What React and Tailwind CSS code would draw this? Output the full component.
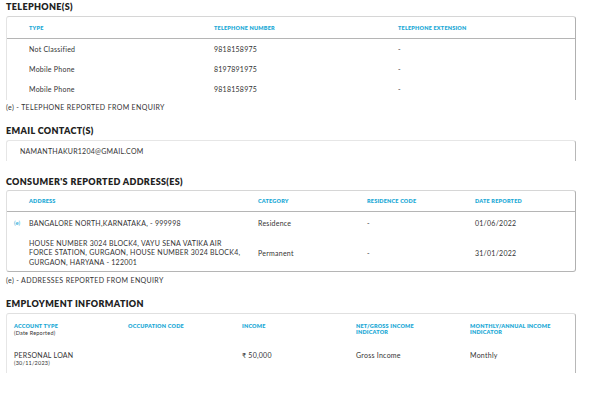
export default function App() {
  const font = { fontFamily: "Lato, 'Open Sans', sans-serif" };
  const H = ({ children, className = "" }) => (
    <div className={`text-[9px] font-extrabold text-[#222] tracking-[0.35px] leading-[10px] ${className}`}>{children}</div>
  );
  const L = ({ children, className = "" }) => (
    <div className={`text-[5.5px] font-extrabold text-[#1ba9d6] tracking-[0.2px] leading-[6px] ${className}`}>{children}</div>
  );
  const T = ({ children, className = "" }) => (
    <div className={`text-[7px] text-[#333] tracking-[0.25px] leading-[9px] ${className}`}>{children}</div>
  );
  return (
    <div className="w-[592px] h-[395px] bg-white overflow-hidden relative" style={font}>
      <div className="pl-[6px] pr-[16px] pt-[2px]">
        <H>TELEPHONE(S)</H>
        <div className="mt-[4px] h-[84px] border-t border-l border-r border-t-[#d6d6d6] border-l-[#e4e4e4] border-r-[#b0b0b0] rounded-tr-[3px] rounded-tl-[3px]">
          <div className="grid grid-cols-[185px_184px_1fr] pl-[22px] h-[22px] items-center border-b border-[#b5b5b5]">
            <L>TYPE</L>
            <L>TELEPHONE NUMBER</L>
            <L>TELEPHONE EXTENSION</L>
          </div>
          {[
            ["Not Classified", "9818158975"],
            ["Mobile Phone", "8197891975"],
            ["Mobile Phone", "9818158975"],
          ].map((r, i) => (
            <div key={i} className="grid grid-cols-[185px_184px_1fr] pl-[22px] h-[20px] items-center">
              <T>{r[0]}</T>
              <T>{r[1]}</T>
              <T>-</T>
            </div>
          ))}
        </div>
        <T className="mt-[3px] text-[6.5px] tracking-[0.35px]">(e) - TELEPHONE REPORTED FROM ENQUIRY</T>

        <H className="mt-[14px]">EMAIL CONTACT(S)</H>
        <div className="mt-[4px] h-[21px] border-t border-l border-r border-t-[#e6e6e6] border-l-[#e6e6e6] border-r-[#b8b8b8] rounded-tr-[3px] rounded-tl-[3px] flex items-center pl-[13px]">
          <T className="text-[6.5px] tracking-[0.3px]">NAMANTHAKUR1204@GMAIL.COM</T>
        </div>

        <H className="mt-[16px]">CONSUMER'S REPORTED ADDRESS(ES)</H>
        <div className="mt-[3px] border border-t-[#d6d6d6] border-l-[#e0e0e0] border-r-[#b0b0b0] border-b-[#b5b5b5] rounded-[3px]">
          <div className="grid grid-cols-[229px_109px_108px_1fr] pl-[22px] h-[21px] items-center border-b border-[#b5b5b5]">
            <L>ADDRESS</L>
            <L>CATEGORY</L>
            <L>RESIDENCE CODE</L>
            <L>DATE REPORTED</L>
          </div>
          <div className="grid grid-cols-[229px_109px_108px_1fr] pl-[22px] h-[23px] items-center relative">
            <span className="absolute left-[7px] top-[7px] text-[6px] leading-[8px] text-[#1ba9d6]">(e)</span>
            <T>BANGALORE NORTH,KARNATAKA, - 999998</T>
            <T>Residence</T>
            <T>-</T>
            <T>01/06/2022</T>
          </div>
          <div className="grid grid-cols-[229px_109px_108px_1fr] pl-[22px] h-[36px] items-center">
            <div className="text-[7px] text-[#333] tracking-[0.25px] leading-[9.5px] whitespace-nowrap">
              HOUSE NUMBER 3024 BLOCK4, VAYU SENA VATIKA AIR<br />FORCE STATION, GURGAON, HOUSE NUMBER 3024 BLOCK4,<br />GURGAON, HARYANA - 122001
            </div>
            <T>Permanent</T>
            <T>-</T>
            <T>31/01/2022</T>
          </div>
        </div>
        <T className="mt-[4px] text-[6.5px] tracking-[0.35px]">(e) - ADDRESSES REPORTED FROM ENQUIRY</T>

        <H className="mt-[14px]">EMPLOYMENT INFORMATION</H>
        <div className="mt-[4px] h-[60px] border-t border-l border-r border-t-[#e0e0e0] border-l-[#e6e6e6] border-r-[#b8b8b8] rounded-tr-[3px] rounded-tl-[3px] pl-[7px]">
          <div className="grid grid-cols-[114px_114px_114px_114px_1fr] pt-[9px]">
            <div>
              <L>ACCOUNT TYPE</L>
              <div className="text-[5.5px] text-[#333] tracking-[0.2px] leading-[7px] mt-[1px]">(Date Reported)</div>
            </div>
            <L>OCCUPATION CODE</L>
            <L>INCOME</L>
            <L>NET/GROSS INCOME<br />INDICATOR</L>
            <L>MONTHLY/ANNUAL INCOME<br />INDICATOR</L>
          </div>
          <div className="grid grid-cols-[114px_114px_114px_114px_1fr] mt-[14px]">
            <div>
              <T>PERSONAL LOAN</T>
              <div className="text-[5.5px] text-[#333] tracking-[0.2px] leading-[7px]">(30/11/2023)</div>
            </div>
            <div></div>
            <T>₹ 50,000</T>
            <T>Gross Income</T>
            <T>Monthly</T>
          </div>
        </div>
      </div>
    </div>
  );
}
